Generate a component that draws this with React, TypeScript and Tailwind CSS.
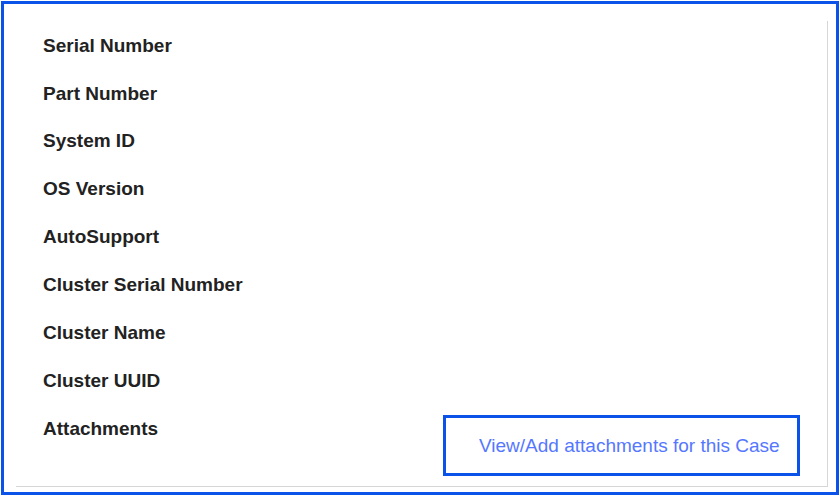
import React from 'react';

const labels = [
  'Serial Number',
  'Part Number',
  'System ID',
  'OS Version',
  'AutoSupport',
  'Cluster Serial Number',
  'Cluster Name',
  'Cluster UUID',
];

export default function App() {
  return (
    <div className="w-[840px] h-[497px] bg-white p-px font-['Liberation_Sans',Arial,sans-serif]">
      <div className="w-[838px] h-[494px] border-[3px] border-[#0a52e8] pl-3 pt-[17px] pr-2 pb-[5px]">
        <div className="h-full border-r border-b border-[#d6d6d6] pl-[27px] pr-[27px]">
          {labels.map((label) => (
            <div key={label} className="h-[47.875px] pt-[2px] flex items-center text-[19px] font-bold text-[#222]">
              {label}
            </div>
          ))}
          <div className="flex justify-between">
            <div className="h-[47.875px] pt-[2px] flex items-center text-[19px] font-bold text-[#222]">Attachments</div>
            <a
              href="#"
              className="mt-[11px] w-[357px] h-[61px] border-[3px] border-[#0a52e8] flex items-center pl-[33px] pt-[2px] text-[19px] text-[#5577ff]"
            >
              View/Add attachments for this Case
            </a>
          </div>
        </div>
      </div>
    </div>
  );
}
